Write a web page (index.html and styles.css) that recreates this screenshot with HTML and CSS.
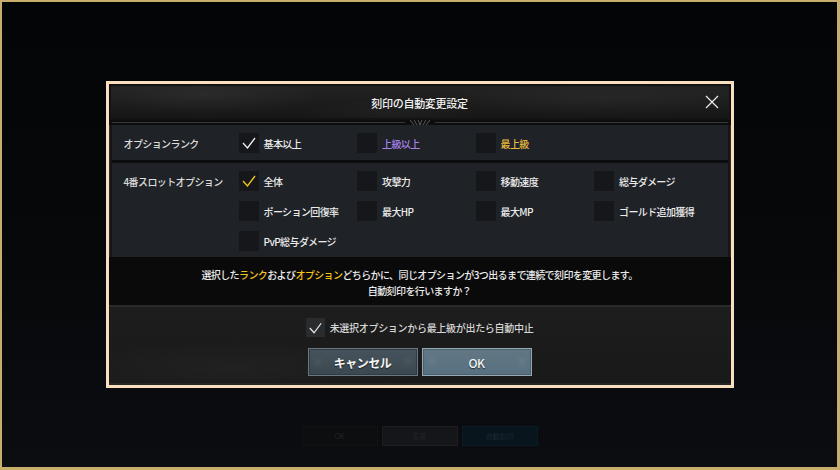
FILE: index.html
```html
<!DOCTYPE html>
<html lang="ja">
<head>
<meta charset="utf-8">
<title>刻印の自動変更設定</title>
<link rel="stylesheet" href="styles.css">
</head>
<body>
<div class="screen">
  <div class="dialog">
    <div class="header">
      <span></span>
      <div class="title">刻印の自動変更設定</div>
      <button class="close" aria-label="閉じる">
        <svg viewBox="0 0 14 14" width="14" height="14"><path d="M1 1 L13 13 M13 1 L1 13" stroke="#e8e8e8" stroke-width="1.3" fill="none"/></svg>
      </button>
    </div>
    <div class="header-rule">
      <span class="rule-line"></span>
      <svg class="orn" viewBox="0 0 26 6" width="26" height="6"><path d="M3 0 L7 5 M7 0 L10 5 M11 0 L13 5 L15 0 M16 5 L19 0 M19 5 L23 0" stroke="#5a5a5a" stroke-width="1" fill="none"/></svg>
      <span class="rule-line"></span>
    </div>
    <div class="panel">
      <div class="row rank">
        <div class="row-label">オプションランク</div>
        <div class="opt"><span class="box"><svg viewBox="0 0 20 20"><path d="M4 10 L8.5 15 L16 5" stroke="#f0f0f0" stroke-width="1.3" fill="none"/></svg></span><span class="opt-text">基本以上</span></div>
        <div class="opt"><span class="box"></span><span class="opt-text purple">上級以上</span></div>
        <div class="opt"><span class="box"></span><span class="opt-text gold">最上級</span></div>
      </div>
      <div class="row-sep"></div>
      <div class="row slot">
        <div class="row-label">4番スロットオプション</div>
        <div class="opt"><span class="box"><svg viewBox="0 0 20 20"><path d="M4 10 L8.5 15 L16 5" stroke="#f2c21e" stroke-width="1.4" fill="none"/></svg></span><span class="opt-text">全体</span></div>
        <div class="opt"><span class="box"></span><span class="opt-text">攻撃力</span></div>
        <div class="opt"><span class="box"></span><span class="opt-text">移動速度</span></div>
        <div class="opt"><span class="box"></span><span class="opt-text">総与ダメージ</span></div>
        <div class="opt col2"><span class="box"></span><span class="opt-text">ポーション回復率</span></div>
        <div class="opt"><span class="box"></span><span class="opt-text">最大HP</span></div>
        <div class="opt"><span class="box"></span><span class="opt-text">最大MP</span></div>
        <div class="opt"><span class="box"></span><span class="opt-text">ゴールド追加獲得</span></div>
        <div class="opt col2"><span class="box"></span><span class="opt-text">PvP総与ダメージ</span></div>
      </div>
    </div>
    <div class="message">
      <p>選択した<span class="hl">ランク</span>および<span class="hl">オプション</span>どちらかに、同じオプションが3つ出るまで連続で刻印を変更します。</p>
      <p>自動刻印を行いますか？</p>
    </div>
    <div class="footer">
      <div class="opt auto-stop"><span class="box"><svg viewBox="0 0 20 20"><path d="M4 10 L8.5 15 L16 5" stroke="#e8e8e8" stroke-width="1.3" fill="none"/></svg></span><span class="opt-text">未選択オプションから最上級が出たら自動中止</span></div>
      <div class="buttons">
        <button class="btn cancel">キャンセル</button>
        <button class="btn ok">OK</button>
      </div>
    </div>
  </div>
  <div class="bg-buttons">
    <div class="bg-btn b1">OK</div>
    <div class="bg-btn b2">変更</div>
    <div class="bg-btn b3">自動刻印</div>
  </div>
</div>
</body>
</html>
```

FILE: styles.css
```css
html, body {
  margin: 0;
  padding: 0;
  background: #050608;
}

.screen {
  width: 840px;
  height: 470px;
  box-sizing: border-box;
  border: 3px solid #c8ae6c;
  border-top-width: 2px;
  border-left-width: 2px;
  background: linear-gradient(180deg, #040506 0%, #07080a 55%, #0c0d11 100%);
  display: flex;
  flex-direction: column;
  align-items: center;
  padding-top: 79px;
  font-family: "Noto Sans CJK JP", "Noto Sans", sans-serif;
  color: #e6e6e6;
}

.dialog {
  width: 628px;
  box-sizing: border-box;
  border: 3px solid #f8dfbf;
  background: #151515;
  display: flex;
  flex-direction: column;
  box-shadow: inset 0 0 0 1px #2e2e2e;
}

.header {
  height: 36px;
  display: grid;
  grid-template-columns: 1fr auto 1fr;
  align-items: center;
  background:
    radial-gradient(ellipse 120px 20px at 15% 30%, rgba(255,255,255,0.05), transparent),
    radial-gradient(ellipse 160px 18px at 80% 40%, rgba(255,255,255,0.04), transparent),
    radial-gradient(ellipse 90px 14px at 45% 80%, rgba(255,255,255,0.03), transparent),
    linear-gradient(180deg, #232323 0%, #1b1b1b 60%, #161616 100%);
  box-shadow: inset 0 0 0 2px #121212;
}

.title {
  font-size: 11px;
  letter-spacing: -0.3px;
  color: #f2f2f2;
  font-weight: 500;
  padding-top: 1px;
}

.close {
  justify-self: end;
  margin-right: 12px;
  width: 14px;
  height: 14px;
  padding: 0;
  border: 0;
  background: none;
  display: flex;
}

.header-rule {
  height: 5px;
  display: flex;
  align-items: center;
  background: #0d0d0d;
  padding: 0 3px;
}

.rule-line {
  flex: 1;
  height: 1px;
  background: #383838;
}

.orn {
  display: block;
  margin: 0 2px;
}

.panel {
  margin: 0 3px;
  background: #0e0f11;
  display: flex;
  flex-direction: column;
}

.row {
  display: grid;
  grid-template-columns: 115px repeat(4, 118.5px);
  align-items: center;
  padding-left: 12px;
  background: #1f2227;
}

.rank {
  padding-top: 8px;
  padding-bottom: 7px;
}

.row-sep {
  height: 3px;
  background: #0c0d0f;
}

.slot {
  padding-top: 8px;
  padding-bottom: 6px;
  row-gap: 10px;
}

.row-label {
  font-size: 10px;
  letter-spacing: -0.6px;
  color: #dcdcdc;
  font-weight: 500;
}

.col2 {
  grid-column: 2;
}

.opt {
  display: flex;
  align-items: center;
  gap: 5px;
}

.box {
  width: 20px;
  height: 20px;
  flex: none;
  background: #15171a;
  display: flex;
}

.box svg {
  width: 20px;
  height: 20px;
}

.opt-text {
  font-size: 10px;
  letter-spacing: -0.6px;
  color: #ececec;
  font-weight: 500;
  white-space: nowrap;
}

.purple { color: #a682ea; }
.gold { color: #e6b940; }

.message {
  height: 50px;
  box-sizing: border-box;
  padding-top: 3px;
  background: #0a0a0b;
  display: flex;
  flex-direction: column;
  justify-content: center;
  align-items: center;
  border-bottom: 2px solid #2a2a2a;
}

.message p {
  margin: 0;
  font-size: 10px;
  line-height: 16px;
  letter-spacing: -0.6px;
  color: #ececec;
  font-weight: 500;
}

.hl { color: #f4c21c; }

.footer {
  display: flex;
  flex-direction: column;
  align-items: center;
  padding: 11px 0 9px;
  gap: 11px;
  background:
    radial-gradient(ellipse 200px 30px at 20% 80%, rgba(255,255,255,0.03), transparent),
    linear-gradient(180deg, #1d1d1d, #191919);
  box-shadow: inset 0 -2px 0 #262626;
}

.auto-stop .opt-text {
  color: #d6d6d6;
  letter-spacing: -0.3px;
}

.auto-stop .box {
  width: 19px;
  height: 19px;
  background: #2a2b2d;
}

.buttons {
  display: flex;
  gap: 4px;
}

.btn {
  width: 110px;
  height: 28px;
  box-sizing: border-box;
  font-family: "Noto Sans CJK JP", "Noto Sans", sans-serif;
  font-size: 12px;
  font-weight: bold;
  letter-spacing: -0.5px;
  color: #f4f4f4;
  padding: 0;
  text-shadow: 0 1px 1px rgba(0,0,0,0.6);
}

.cancel {
  border: 1px solid #6a7780;
  background:
    radial-gradient(circle 7px at 9px 50%, rgba(255,255,255,0.04), transparent),
    radial-gradient(circle 7px at calc(100% - 9px) 50%, rgba(255,255,255,0.04), transparent),
    linear-gradient(180deg, #46535c, #3b4850);
  box-shadow: inset 0 0 0 1px #303a41;
}

.ok {
  border: 1px solid #95a9b5;
  font-weight: 500;
  background:
    radial-gradient(circle 7px at 9px 50%, rgba(255,255,255,0.05), transparent),
    radial-gradient(circle 7px at calc(100% - 9px) 50%, rgba(255,255,255,0.05), transparent),
    linear-gradient(180deg, #627784, #577080);
  box-shadow: inset 0 0 0 1px #4b606c;
}

.bg-buttons {
  display: flex;
  gap: 4px;
  margin-top: 38px;
}

.bg-btn {
  width: 76px;
  height: 20px;
  box-sizing: border-box;
  font-size: 7px;
  line-height: 18px;
  text-align: center;
  color: #222428;
}

.b1 {
  background: #0d0e10;
  border: 1px solid #101114;
}

.b2 {
  background: #141619;
  border: 1px solid #1b1d21;
}

.b3 {
  background: #09151d;
  border: 1px solid #0c1a24;
  color: #1a2833;
}
```
